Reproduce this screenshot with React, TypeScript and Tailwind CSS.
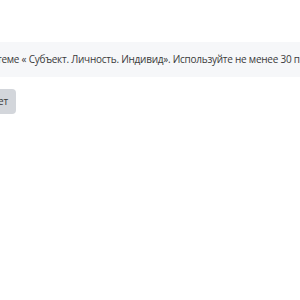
export default function App() {
  return (
    <div className="min-h-[300px] bg-white overflow-hidden" style={{ fontFamily: '"Open Sans", "Noto Sans", sans-serif' }}>
      <div className="pt-[42px] w-[700px]">
        <div className="bg-[#f6f7f9] h-[35px] flex items-center text-[10px] tracking-[-0.25px] text-[#3a3a3a] whitespace-nowrap">
          <span className="ml-[-90px]">
            Напишите эссе по теме « Субъект. Личность. Индивид». Используйте не менее 30 предложений.
          </span>
        </div>
        <div className="mt-[12px] flex">
          <button className="ml-[-73px] h-[25px] px-[8px] rounded-[4px] bg-[#d3d6db] text-[10px] tracking-[-0.25px] text-[#3a3a3a] whitespace-nowrap">
            Получить ответ
          </button>
        </div>
      </div>
    </div>
  );
}
